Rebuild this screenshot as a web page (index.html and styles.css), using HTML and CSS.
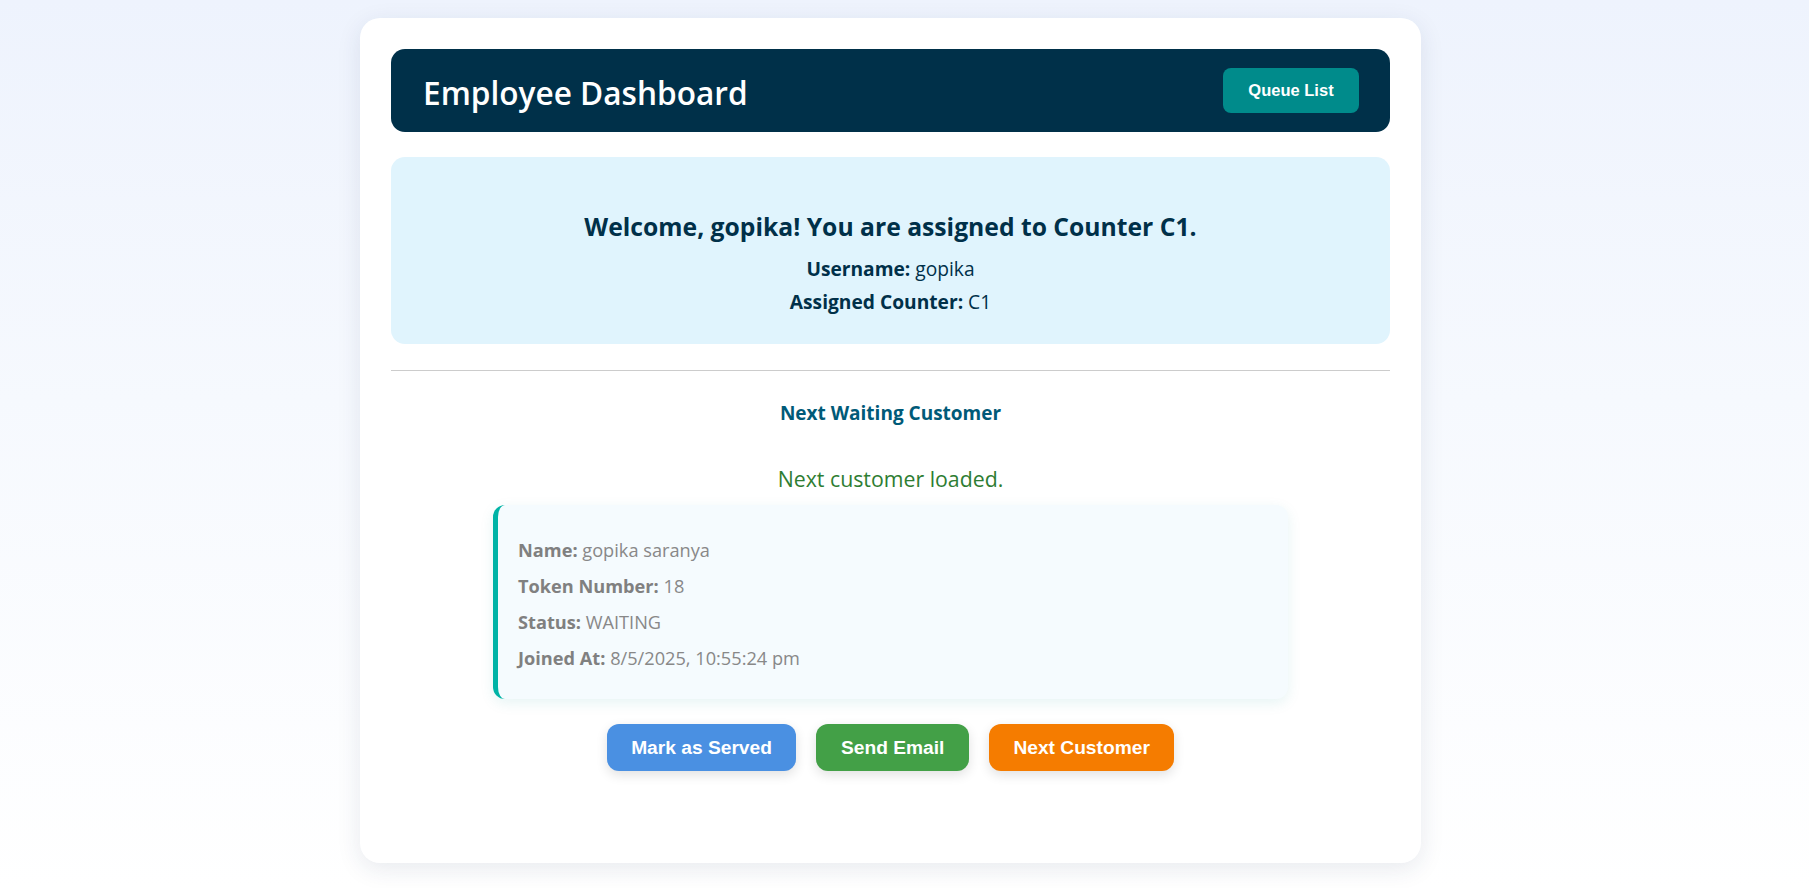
FILE: index.html
```html
<!DOCTYPE html>
<html lang="en">
<head>
<meta charset="utf-8">
<title>Employee Dashboard</title>
<link rel="stylesheet" href="styles.css">
</head>
<body>
<div class="page">
  <main class="card">
    <header class="topbar">
      <h1 class="title">Employee Dashboard</h1>
      <button class="queue-btn">Queue List</button>
    </header>

    <section class="welcome">
      <h2 class="welcome-title">Welcome, gopika! You are assigned to Counter C1.</h2>
      <p class="welcome-line"><strong>Username:</strong> gopika</p>
      <p class="welcome-line"><strong>Assigned Counter:</strong> C1</p>
    </section>

    <hr class="divider">

    <h3 class="section-title">Next Waiting Customer</h3>
    <p class="status-msg">Next customer loaded.</p>

    <div class="customer">
      <p class="customer-line"><strong>Name:</strong> gopika saranya</p>
      <p class="customer-line"><strong>Token Number:</strong> 18</p>
      <p class="customer-line"><strong>Status:</strong> WAITING</p>
      <p class="customer-line"><strong>Joined At:</strong> 8/5/2025, 10:55:24 pm</p>
    </div>

    <div class="actions">
      <button class="action served">Mark as Served</button>
      <button class="action email">Send Email</button>
      <button class="action next">Next Customer</button>
    </div>
  </main>
</div>
</body>
</html>
```

FILE: styles.css
```css
* { box-sizing: border-box; }

html, body {
  margin: 0;
  padding: 0;
}

body {
  min-height: 888px;
  background: linear-gradient(180deg, #eef3fd 0%, #f6f9fe 45%, #ffffff 100%);
  font-family: "Open Sans", "Noto Sans", sans-serif;
}

.page {
  padding: 18px 0 25px 360px;
}

.card {
  width: 1061px;
  height: 845px;
  background: #ffffff;
  border-radius: 20px;
  box-shadow: 0 6px 24px rgba(30, 50, 90, 0.10);
  padding: 31px 31px 0 31px;
}

.topbar {
  height: 83px;
  background: #003049;
  border-radius: 14px;
  display: flex;
  align-items: center;
  justify-content: space-between;
  padding: 0 31px 0 32px;
}

.title {
  margin: 4px 0 0 0;
  color: #ffffff;
  font-size: 31.6px;
  font-weight: 600;
  letter-spacing: 0;
}

.queue-btn {
  width: 136px;
  height: 45px;
  border: none;
  border-radius: 8px;
  background: #008b8b;
  color: #ffffff;
  font-family: "Liberation Sans", Arial, sans-serif;
  font-weight: 700;
  font-size: 16.5px;
}

.welcome {
  margin-top: 25px;
  height: 187px;
  background: #e0f4fd;
  border-radius: 14px;
  color: #003049;
  text-align: center;
  padding-top: 55px;
}

.welcome-title {
  margin: 0 0 10px 0;
  font-size: 24.7px;
  font-weight: 700;
  line-height: 30px;
}

.welcome-line {
  margin: 0;
  font-size: 19.2px;
  line-height: 33px;
}

.welcome-line strong { font-weight: 700; }

.divider {
  margin: 26px 0 0 0;
  border: none;
  border-top: 1px solid #cccccc;
  height: 0;
}

.section-title {
  margin: 27px 0 0 0;
  text-align: center;
  font-size: 19px;
  font-weight: 700;
  line-height: 30px;
  color: #005a78;
}

.status-msg {
  margin: 36px 0 0 0;
  text-align: center;
  font-size: 21.3px;
  line-height: 30px;
  color: #2e7d32;
}

.customer {
  width: 795px;
  margin: 11px auto 0 auto;
  height: 194px;
  background: #f5fbfe;
  border-left: 5px solid #00b3a6;
  border-radius: 12px;
  box-shadow: 0 4px 14px rgba(0, 150, 150, 0.10);
  padding: 27px 0 0 20px;
  color: #888888;
}

.customer-line {
  margin: 0;
  font-size: 18.2px;
  line-height: 36px;
}

.customer-line strong { font-weight: 700; color: #808080; }

.actions {
  display: flex;
  justify-content: center;
  gap: 20px;
  margin-top: 25px;
}

.action {
  height: 47px;
  border: none;
  border-radius: 12px;
  padding: 0 24.5px;
  color: #ffffff;
  font-family: "Liberation Sans", Arial, sans-serif;
  font-weight: 700;
  font-size: 19.2px;
  box-shadow: 0 4px 12px rgba(0, 0, 0, 0.12);
}

.served { background: #4a90e2; }
.email { background: #43a047; }
.next { background: #f57c00; }
```
